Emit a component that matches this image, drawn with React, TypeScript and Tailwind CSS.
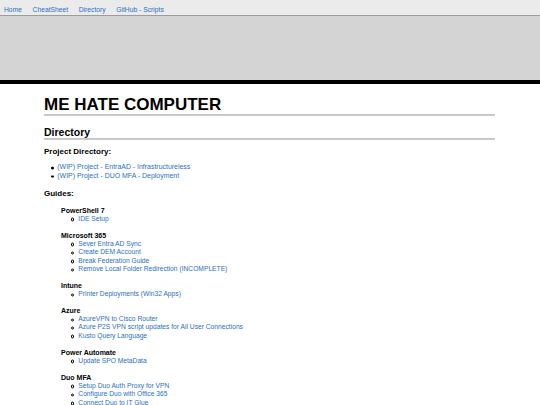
const navLinks = ["Home", "CheatSheet", "Directory", "GitHub - Scripts"];

const projects = [
  "(WIP) Project - EntraAD - Infrastructureless",
  "(WIP) Project - DUO MFA - Deployment",
];

const guides = [
  { title: "PowerShell 7", items: ["IDE Setup"] },
  {
    title: "Microsoft 365",
    items: [
      "Sever Entra AD Sync",
      "Create DEM Account",
      "Break Federation Guide",
      "Remove Local Folder Redirection (INCOMPLETE)",
    ],
  },
  { title: "Intune", items: ["Printer Deployments (Win32 Apps)"] },
  {
    title: "Azure",
    items: [
      "AzureVPN to Cisco Router",
      "Azure P2S VPN script updates for All User Connections",
      "Kusto Query Language",
    ],
  },
  { title: "Power Automate", items: ["Update SPO MetaData"] },
  {
    title: "Duo MFA",
    items: [
      "Setup Duo Auth Proxy for VPN",
      "Configure Duo with Office 365",
      "Connect Duo to IT Glue",
    ],
  },
];

export default function App() {
  return (
    <div className="w-[540px] h-[405px] overflow-hidden bg-white text-black font-['Liberation_Sans',Arial,sans-serif]">
      {/* top nav */}
      <nav className="h-[16px] bg-[#ebebec] border-b border-[#9c9c9c] flex gap-[10.5px] pl-[4px] pt-[5px]">
        {navLinks.map((l) => (
          <a key={l} className="text-[6.75px] leading-[10px] text-[#2a6fc4] whitespace-nowrap">
            {l}
          </a>
        ))}
      </nav>

      {/* banner */}
      <div className="h-[68px] bg-[#d4d4d4] border-b-4 border-black" />

      <main className="ml-[44px] mr-[45px]">
        <h1 className="mt-[11px] text-[17px] leading-[19px] font-bold border-b-2 border-[#c9c9c9]">
          ME HATE COMPUTER
        </h1>
        <h2 className="mt-[10px] text-[10.5px] leading-[12px] font-bold border-b-2 border-[#c9c9c9]">
          Directory
        </h2>

        <h4 className="mt-[7px] text-[8px] leading-[9px] font-bold">Project Directory:</h4>
        <ul className="mt-[7.3px]">
          {projects.map((p) => (
            <li key={p} className="flex items-center h-[8.4px] pl-[7px]">
              <span className="w-[2.5px] h-[2.5px] rounded-full bg-black mr-[3.8px] translate-y-[0.5px]" />
              <a className="text-[6.95px] leading-[8.4px] text-[#2a6fc4] whitespace-nowrap">{p}</a>
            </li>
          ))}
        </ul>

        <h4 className="mt-[9.3px] text-[8px] leading-[9px] font-bold">Guides:</h4>
        <div className="mt-[8.3px] pl-[17px] flex flex-col gap-[8.35px]">
          {guides.map((g) => (
            <div key={g.title}>
              <div className="text-[7px] leading-[8.35px] font-bold whitespace-nowrap">{g.title}</div>
              <ul>
                {g.items.map((it) => (
                  <li key={it} className="flex items-center h-[8.35px] pl-[9.5px]">
                    <span className="w-[3.5px] h-[3.5px] rounded-full border-[0.8px] border-black mr-[4.3px] translate-y-[0.5px]" />
                    <a className="text-[6.7px] leading-[8.35px] text-[#2a6fc4] whitespace-nowrap">{it}</a>
                  </li>
                ))}
              </ul>
            </div>
          ))}
        </div>
      </main>
    </div>
  );
}
